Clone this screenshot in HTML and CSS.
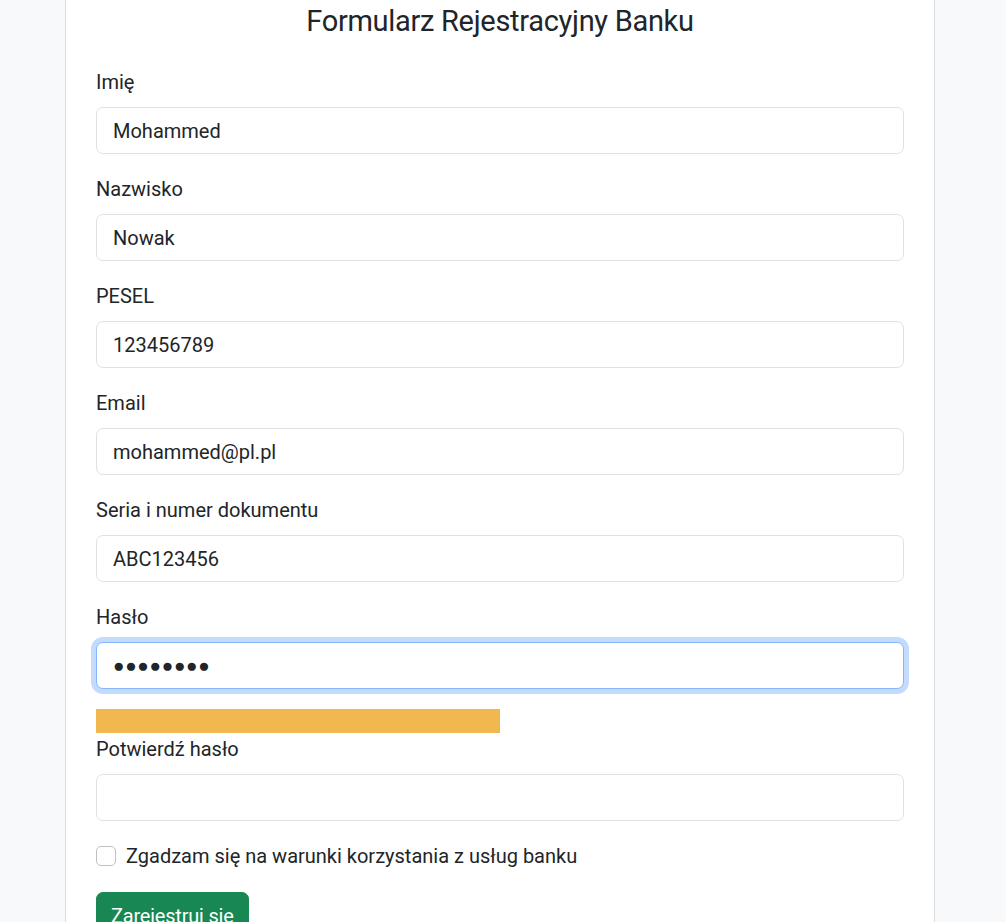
FILE: index.html
```html
<!DOCTYPE html>
<html lang="pl">
<head>
<meta charset="utf-8">
<title>Formularz Rejestracyjny Banku</title>
<link rel="stylesheet" href="styles.css">
</head>
<body>
<div class="page">
  <div class="card">
    <h4 class="title">Formularz Rejestracyjny Banku</h4>
    <form class="form">
      <div class="group">
        <label class="label" for="imie">Imię</label>
        <input class="control" id="imie" type="text" value="Mohammed">
      </div>
      <div class="group">
        <label class="label" for="nazwisko">Nazwisko</label>
        <input class="control" id="nazwisko" type="text" value="Nowak">
      </div>
      <div class="group">
        <label class="label" for="pesel">PESEL</label>
        <input class="control" id="pesel" type="text" value="123456789">
      </div>
      <div class="group">
        <label class="label" for="email">Email</label>
        <input class="control" id="email" type="text" value="mohammed@pl.pl">
      </div>
      <div class="group">
        <label class="label" for="dok">Seria i numer dokumentu</label>
        <input class="control" id="dok" type="text" value="ABC123456">
      </div>
      <div class="group">
        <label class="label" for="haslo">Hasło</label>
        <div class="control focused dots">●●●●●●●●</div>
      </div>
      <div class="strength"><div class="strength-fill" style="width:50%"></div></div>
      <div class="group">
        <label class="label" for="haslo2">Potwierdź hasło</label>
        <input class="control" id="haslo2" type="text" value="">
      </div>
      <div class="group check">
        <span class="check-box"></span>
        <label class="check-label">Zgadzam się na warunki korzystania z usług banku</label>
      </div>
      <button type="button" class="btn">Zarejestruj się</button>
    </form>
  </div>
</div>
</body>
</html>
```

FILE: styles.css
```css
html, body {
  margin: 0;
  padding: 0;
  background: #f8f9fa;
  height: 100%;
  overflow: hidden;
}
body {
  font-family: Roboto, "Liberation Sans", sans-serif;
  font-size: 20px;
  line-height: 1.5;
  color: #212529;
}
.page {
  padding-left: 65px;
}
.card {
  box-sizing: border-box;
  width: 870px;
  margin-top: -28px;
  background: #fff;
  border: 1px solid #dcdedf;
  border-radius: 7px;
  padding: 30px 30px 40px;
}
.title {
  margin: 0 0 28px;
  font-size: 29px;
  line-height: 36px;
  font-weight: 400;
  letter-spacing: -0.3px;
  text-align: center;
}
.form {
  display: flex;
  flex-direction: column;
}
.group {
  margin-bottom: 20px;
}
.label {
  display: block;
  margin-bottom: 10px;
}
.control {
  display: block;
  box-sizing: border-box;
  width: 100%;
  height: 47px;
  padding: 7px 16px;
  font: inherit;
  color: #212529;
  background: #fff;
  border: 1px solid #dee2e6;
  border-radius: 7px;
  outline: none;
}
.focused {
  border-color: #86b7fe;
  box-shadow: 0 0 0 5px rgba(13, 110, 253, 0.25);
}
.dots {
  font-size: 19px;
  line-height: 31px;
  letter-spacing: 0.7px;
}
.strength {
  height: 24px;
  margin-bottom: 1px;
}
.strength-fill {
  height: 100%;
  background: #f0b84e;
}
.check {
  display: flex;
  align-items: center;
  gap: 10px;
  margin-bottom: 21px;
}
.check-box {
  box-sizing: border-box;
  width: 20px;
  height: 20px;
  border: 1px solid #bfc1c3;
  border-radius: 5px;
  background: #fff;
}
.btn {
  align-self: flex-start;
  height: 47px;
  padding: 7px 14px;
  font: inherit;
  letter-spacing: -0.2px;
  color: #fff;
  background: #198754;
  border: 1px solid #198754;
  border-radius: 7px;
}
```
